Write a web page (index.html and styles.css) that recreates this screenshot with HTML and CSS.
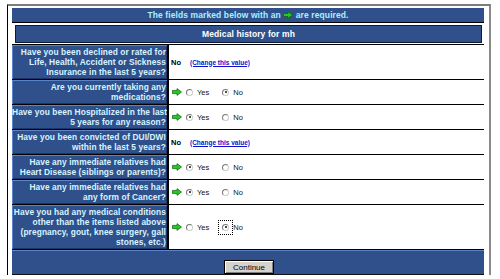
FILE: index.html
```html
<!DOCTYPE html>
<html lang="en">
<head>
    <meta charset="UTF-8">
    <title>Medical history</title>
    <link rel="stylesheet" href="styles.css">
</head>
<body>
<div class="frame">
    <form class="panel">
        <!-- Required fields notice -->
        <div class="notice">The fields marked below with an
            <svg class="arrow" viewBox="0 0 10 8"><path d="M0.5 2.4 H5 V0.6 L9.5 4 L5 7.4 V5.6 H0.5 Z"/></svg>
            are required.</div>

        <div class="title-wrap">
            <div class="title">Medical history for mh</div>
        </div>

        <div class="row">
            <div class="label">Have you been declined or rated for<br>Life, Health, Accident or Sickness<br>Insurance in the last 5 years?</div>
            <div class="value"><b class="answer">No</b><a class="change" href="#">(Change this value)</a></div>
        </div>

        <div class="row">
            <div class="label">Are you currently taking any<br>medications?</div>
            <div class="value">
                <svg class="arrow" viewBox="0 0 10 8"><path d="M0.5 2.4 H5 V0.6 L9.5 4 L5 7.4 V5.6 H0.5 Z"/></svg>
                <label class="choice"><span class="radio"></span>Yes</label>
                <label class="choice"><span class="radio on"></span>No</label>
            </div>
        </div>

        <div class="row">
            <div class="label">Have you been Hospitalized in the last<br>5 years for any reason?</div>
            <div class="value">
                <svg class="arrow" viewBox="0 0 10 8"><path d="M0.5 2.4 H5 V0.6 L9.5 4 L5 7.4 V5.6 H0.5 Z"/></svg>
                <label class="choice"><span class="radio on"></span>Yes</label>
                <label class="choice"><span class="radio"></span>No</label>
            </div>
        </div>

        <div class="row">
            <div class="label">Have you been convicted of DUI/DWI<br>within the last 5 years?</div>
            <div class="value"><b class="answer">No</b><a class="change" href="#">(Change this value)</a></div>
        </div>

        <div class="row">
            <div class="label">Have any immediate relatives had<br>Heart Disease (siblings or parents)?</div>
            <div class="value">
                <svg class="arrow" viewBox="0 0 10 8"><path d="M0.5 2.4 H5 V0.6 L9.5 4 L5 7.4 V5.6 H0.5 Z"/></svg>
                <label class="choice"><span class="radio on"></span>Yes</label>
                <label class="choice"><span class="radio"></span>No</label>
            </div>
        </div>

        <div class="row">
            <div class="label">Have any immediate relatives had<br>any form of Cancer?</div>
            <div class="value">
                <svg class="arrow" viewBox="0 0 10 8"><path d="M0.5 2.4 H5 V0.6 L9.5 4 L5 7.4 V5.6 H0.5 Z"/></svg>
                <label class="choice"><span class="radio on"></span>Yes</label>
                <label class="choice"><span class="radio"></span>No</label>
            </div>
        </div>

        <div class="row">
            <div class="label">Have you had any medical conditions<br>other than the items listed above<br>(pregnancy, gout, knee surgery, gall<br>stones, etc.)</div>
            <div class="value">
                <svg class="arrow" viewBox="0 0 10 8"><path d="M0.5 2.4 H5 V0.6 L9.5 4 L5 7.4 V5.6 H0.5 Z"/></svg>
                <label class="choice"><span class="radio"></span>Yes</label>
                <label class="choice"><span class="focus-box"><span class="radio on"></span></span>No</label>
            </div>
        </div>

        <div class="footer">
            <button type="button" class="continue">Continue</button>
        </div>
    </form>
</div>
</body>
</html>
```

FILE: styles.css
```css
/* Page basics */
body {
    margin: 0;
    background-color: #fff;
    font-family: "Liberation Sans", Arial, sans-serif;
}

/* Grey window frame round the form */
.frame {
    margin: 4px 0 0 7px;
    width: 484px;
    height: 271px;
    padding: 2px 5px 0 4px;
    box-sizing: border-box;
    border-top: 2px solid #7c7c7c;
    border-left: 1px solid #000;
    border-right: 2px solid #8a8a8a;
}

/* Blue form table */
.panel {
    width: 472px;
    background-color: #30508c;
    margin: 0;
}

.notice {
    height: 14px;
    line-height: 14px;
    text-align: center;
    color: #a6f2ff;
    font-size: 8.5px;
    font-weight: bold;
    letter-spacing: 0.1px;
    border-bottom: 1px solid #000;
}

.notice .arrow {
    vertical-align: -1px;
}

.title-wrap {
    background-color: #fff;
    padding: 2px 2px 1px 3px;
}

.title {
    height: 16px;
    line-height: 16px;
    background-color: #30508c;
    border: 1px solid #0e1a38;
    color: #fff;
    text-align: center;
    font-size: 8.5px;
    font-weight: bold;
    letter-spacing: 0.1px;
}

/* Question rows */
.row {
    display: grid;
    grid-template-columns: 155px 1fr;
    border-top: 1px solid #000;
}

.label {
    padding: 2px 1px 2px 0;
    text-align: right;
    white-space: nowrap;
    color: #d6f4ff;
    font-size: 8.4px;
    font-weight: bold;
    letter-spacing: 0.08px;
    line-height: 10px;
    box-shadow: inset 1px 1px 0 #5a84c6, inset -1px -1px 0 #1d3466;
}

.value {
    display: flex;
    align-items: center;
    background-color: #fff;
    border-left: 2px solid #000;
    padding-left: 2px;
    font-size: 7.5px;
}

.answer {
    font-size: 7.5px;
    margin-right: 9px;
}

.change {
    color: #1010d0;
    font-size: 6.5px;
    font-weight: bold;
}

/* Green "required" arrow */
.arrow {
    width: 10px;
    height: 8px;
    fill: #20cc20;
    stroke: #0b5c0b;
    stroke-width: 0.7;
}

.value .arrow {
    margin: 0 4px 0 1px;
}

.choice {
    display: inline-flex;
    align-items: center;
    gap: 4px;
    margin-right: 13px;
    color: #111;
}

/* Small classic radio buttons */
.radio {
    position: relative;
    display: block;
    width: 5px;
    height: 5px;
    border: 1px solid #777;
    border-right-color: #ccc;
    border-bottom-color: #ccc;
    border-radius: 50%;
    background-color: #fff;
}

.radio.on::after {
    content: "";
    position: absolute;
    left: 1.5px;
    top: 1.5px;
    width: 2px;
    height: 2px;
    border-radius: 50%;
    background-color: #111;
}

/* Dotted focus rectangle on the last clicked radio */
.focus-box {
    display: block;
    outline: 1px dotted #000;
    outline-offset: 3px;
}

/* Bottom bar with the submit button */
.footer {
    height: 24px;
    border-top: 1px solid #000;
    box-shadow: inset 0 1px 0 #5a84c6;
    border-bottom: 1px solid #111;
    display: flex;
    justify-content: center;
    align-items: flex-end;
}

.continue {
    width: 50px;
    height: 14px;
    padding: 0;
    font-family: "Liberation Sans", Arial, sans-serif;
    font-size: 8px;
    color: #000;
    background-color: #d6d3cc;
    border: 1px solid #000;
    box-shadow: inset 1px 1px 0 #fff, inset -1px -1px 0 #808080;
    margin-left: 2px;
}
```
